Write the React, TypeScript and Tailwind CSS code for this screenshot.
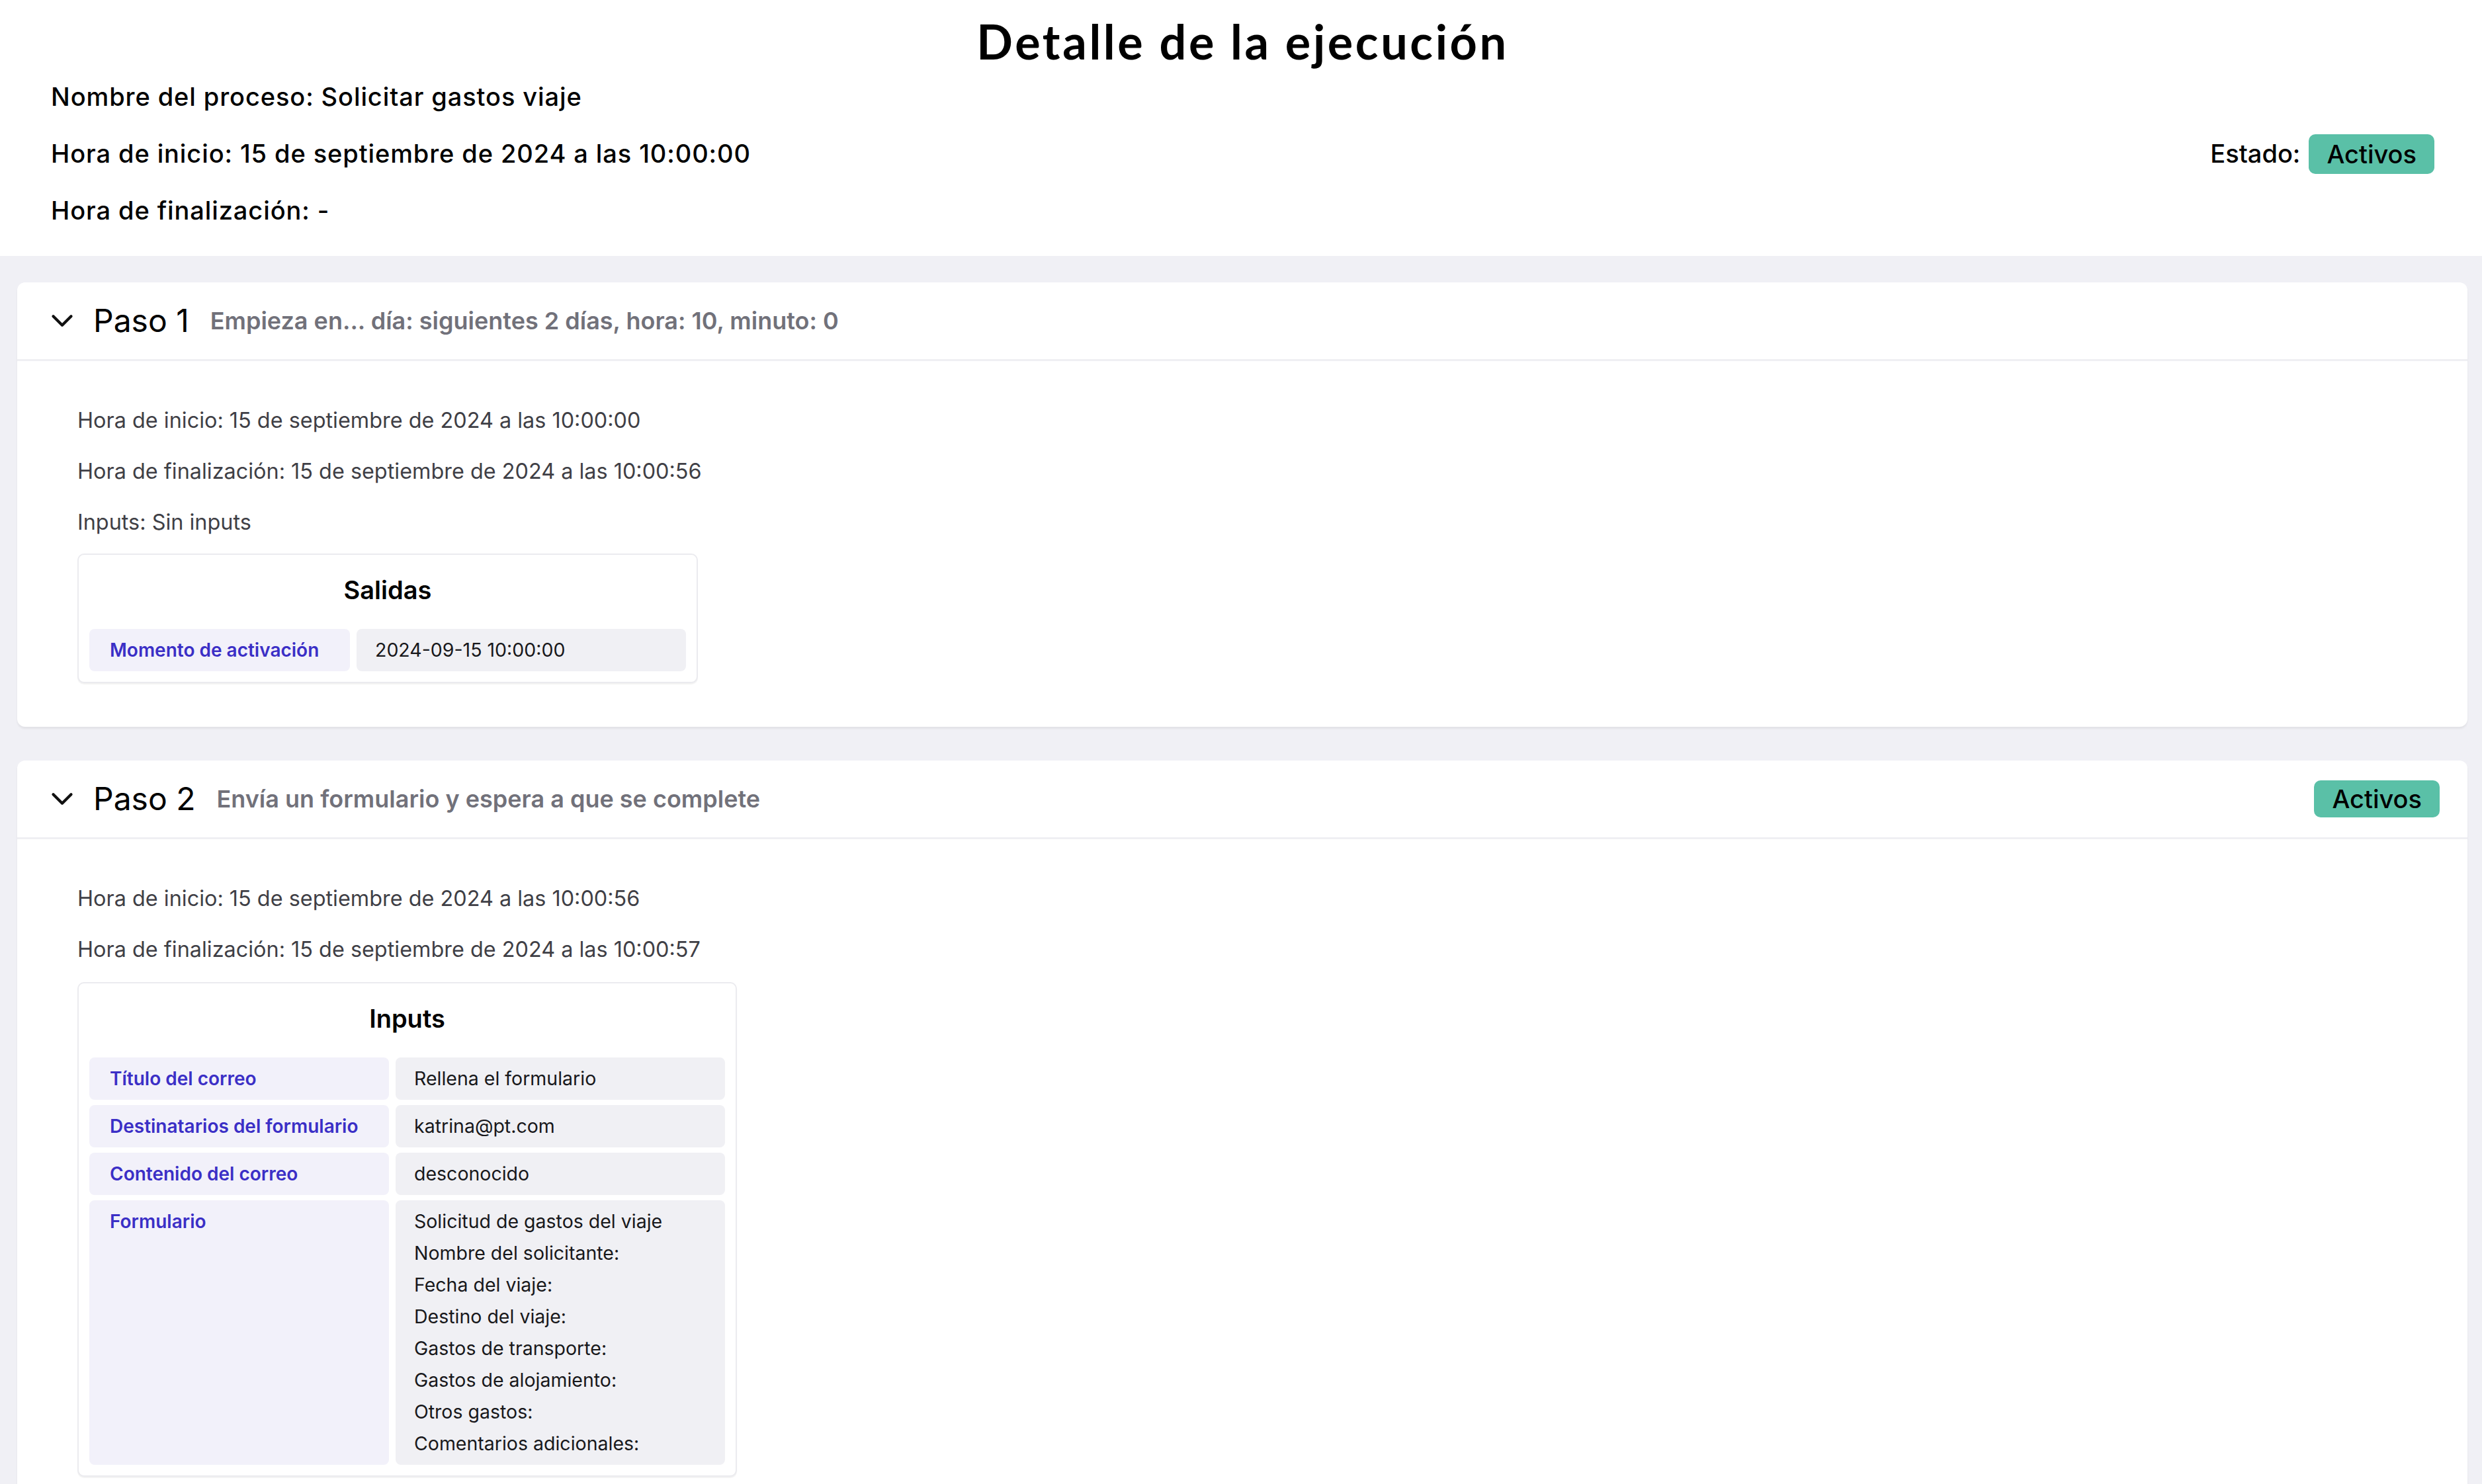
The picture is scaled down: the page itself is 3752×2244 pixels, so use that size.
import React from "react";

type Row = { k: string; v: string[] };

const salidas: Row[] = [{ k: "Momento de activación", v: ["2024-09-15 10:00:00"] }];

const inputs: Row[] = [
  { k: "Título del correo", v: ["Rellena el formulario"] },
  { k: "Destinatarios del formulario", v: ["katrina@pt.com"] },
  { k: "Contenido del correo", v: ["desconocido"] },
  {
    k: "Formulario",
    v: [
      "Solicitud de gastos del viaje",
      "Nombre del solicitante:",
      "Fecha del viaje:",
      "Destino del viaje:",
      "Gastos de transporte:",
      "Gastos de alojamiento:",
      "Otros gastos:",
      "Comentarios adicionales:",
    ],
  },
];

function Chevron() {
  return (
    <svg
      width="54"
      height="54"
      viewBox="0 0 24 24"
      fill="none"
      stroke="#111"
      strokeWidth="1.9"
      strokeLinecap="round"
      strokeLinejoin="round"
      className="shrink-0"
    >
      <path d="m6 9 6 6 6-6" />
    </svg>
  );
}

function Badge({ tall }: { tall?: boolean }) {
  return (
    <span
      className={
        tall
          ? "inline-flex items-center rounded-[10px] bg-[#5ac0a7] px-[27px] h-[60px] text-[38px] font-medium text-black leading-none"
          : "inline-flex items-center rounded-[10px] bg-[#5ac0a7] px-[27px] h-[56px] text-[38px] font-medium text-black leading-none"
      }
    >
      Activos
    </span>
  );
}

function KVBox({ title, rows, wide }: { title: string; rows: Row[]; wide?: boolean }) {
  return (
    <div className="inline-block rounded-[10px] border-2 border-[#ebebef] bg-white p-[16px] shadow-[0_2px_1px_rgba(0,0,0,0.05)]">
      <div className="pt-[13px] pb-[35px] text-center text-[38px] font-semibold leading-[48px] text-black">
        {title}
      </div>
      <div
        className={
          wide
            ? "grid grid-cols-[453px_498px] gap-x-[10px] gap-y-[8px]"
            : "grid grid-cols-[394px_498px] gap-x-[10px] gap-y-[8px]"
        }
      >
        {rows.map((r) => (
          <React.Fragment key={r.k}>
            <div className="rounded-[8px] bg-[#f2f1fa] px-[31px] py-[8px] text-[28px] font-semibold leading-[48px] text-[#3b2fc6]">
              {r.k}
            </div>
            <div className="rounded-[8px] bg-[#f0f0f4] px-[28px] py-[8px] text-[28.5px] font-normal leading-[48px] text-[#18181b]">
              {r.v.map((line) => (
                <div key={line}>{line}</div>
              ))}
            </div>
          </React.Fragment>
        ))}
      </div>
    </div>
  );
}

function StepCard({
  paso,
  subtitle,
  badge,
  children,
}: {
  paso: string;
  subtitle: string;
  badge?: boolean;
  children: React.ReactNode;
}) {
  return (
    <div className="ml-[26px] mr-[22px] rounded-[12px] bg-white shadow-[0_3px_3px_rgba(0,0,0,0.06)]">
      <div className="flex h-[119px] items-center border-b-[3px] border-[#efeff3] pl-[41px] pr-[42px]">
        <Chevron />
        <span className="ml-[20px] text-[48px] font-normal leading-none text-black">{paso}</span>
        <span className="ml-[32px] text-[36px] font-semibold leading-none text-[#71717a]">{subtitle}</span>
        <div className="flex-1" />
        {badge ? <Badge /> : null}
      </div>
      <div className="pl-[91px] pt-[66px] pb-[66px]">{children}</div>
    </div>
  );
}

function Line({ children }: { children: React.ReactNode }) {
  return <div className="text-[32.4px] font-normal leading-[48px] text-[#3f3f46]">{children}</div>;
}

export default function App() {
  return (
    <div className="h-screen overflow-hidden bg-[#f0f0f5] font-['Inter',sans-serif]">
      <header className="bg-white pb-[40px] pl-[77px] pr-[72px] pt-[14px]">
        <h1 className="text-center font-['Lato',sans-serif] text-[72px] font-bold leading-[96px] tracking-[3.6px] text-black">
          Detalle de la ejecución
        </h1>
        <div className="mt-[8px] flex flex-col gap-[29px] text-[38px] font-medium leading-[57px] tracking-[0.9px] text-black">
          <div>Nombre del proceso: Solicitar gastos viaje</div>
          <div className="flex h-[57px] items-center justify-between">
            <span>Hora de inicio: 15 de septiembre de 2024 a las 10:00:00</span>
            <span className="flex items-center gap-[13px] tracking-normal">
              <span>Estado:</span>
              <Badge tall />
            </span>
          </div>
          <div>Hora de finalización: -</div>
        </div>
      </header>

      <main className="flex flex-col gap-[51px] pt-[40px]">
        <StepCard paso="Paso 1" subtitle="Empieza en... día: siguientes 2 días, hora: 10, minuto: 0">
          <div className="flex flex-col gap-[29px]">
            <Line>Hora de inicio: 15 de septiembre de 2024 a las 10:00:00</Line>
            <Line>Hora de finalización: 15 de septiembre de 2024 a las 10:00:56</Line>
            <Line>Inputs: Sin inputs</Line>
          </div>
          <div className="mt-[23px]">
            <KVBox title="Salidas" rows={salidas} />
          </div>
        </StepCard>

        <StepCard paso="Paso 2" subtitle="Envía un formulario y espera a que se complete" badge>
          <div className="flex flex-col gap-[29px]">
            <Line>Hora de inicio: 15 de septiembre de 2024 a las 10:00:56</Line>
            <Line>Hora de finalización: 15 de septiembre de 2024 a las 10:00:57</Line>
          </div>
          <div className="mt-[25px]">
            <KVBox title="Inputs" rows={inputs} wide />
          </div>
        </StepCard>
      </main>
    </div>
  );
}
